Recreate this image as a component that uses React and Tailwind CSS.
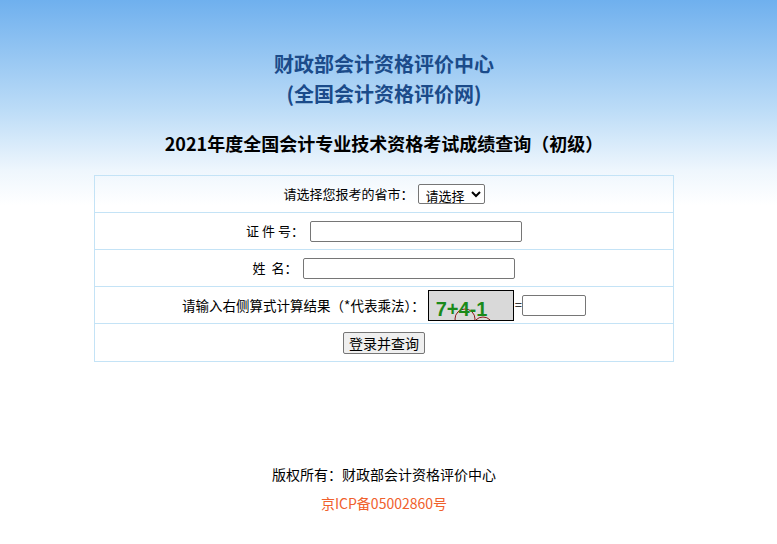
const cjk = { fontFamily: '"Noto Sans CJK SC", "Noto Sans", sans-serif' };

function Row({ children, last }) {
  return (
    <div
      className={
        'flex h-[37px] items-center justify-center text-[13px] text-black ' +
        (last ? '' : 'border-b border-[#c4e3f6]')
      }
    >
      {children}
    </div>
  );
}

function Captcha() {
  return (
    <div className="relative h-[31px] w-[86px] overflow-hidden border border-black bg-[#d9d9d9]">
      <svg className="absolute inset-0" width="86" height="31" viewBox="0 0 86 31">
        <circle cx="36" cy="28" r="10" fill="none" stroke="#8b1a1a" strokeWidth="1" />
        <circle cx="54" cy="36" r="10" fill="none" stroke="#8b1a1a" strokeWidth="1" />
        <circle cx="93" cy="35" r="10" fill="none" stroke="#8b1a1a" strokeWidth="1" />
      </svg>
      <span
        className="absolute left-[7px] top-[8px] text-[20px] font-bold leading-none text-[#1a8a1a]"
        style={{ fontFamily: '"Liberation Sans", Arial, sans-serif' }}
      >
        7+4-1
      </span>
    </div>
  );
}

export default function App() {
  return (
    <div
      className="min-h-[544px] w-full bg-[linear-gradient(to_bottom,#6fb0ee_0px,#bcdcf7_110px,#eef6fd_170px,#ffffff_205px)]"
      style={cjk}
    >
      <div className="w-[768px]">
        <div className="flex flex-col items-center pt-[49px]">
          <div className="text-[20px] font-bold leading-[30px] text-[#1b4b8a]">财政部会计资格评价中心</div>
          <div className="text-[20px] font-bold leading-[30px] text-[#1b4b8a]">(全国会计资格评价网)</div>
          <div className="mt-[19px] text-[18px] font-bold leading-[30px] text-black">
            2021年度全国会计专业技术资格考试成绩查询（初级）
          </div>
        </div>

        <div className="mx-auto mt-[17px] w-[580px] border border-[#c4e3f6]">
          <Row>
            <span>请选择您报考的省市：</span>
            <select
              className="ml-[4px] h-[20px] rounded-[2px] border border-[#767676] bg-white pl-[3px] pr-[2px] text-[13px] text-black"
              style={cjk}
            >
              <option>请选择</option>
            </select>
          </Row>
          <Row>
            <span className="mr-[6px]">证 件 号：</span>
            <input className="h-[21px] w-[212px] rounded-[2px] border border-[#767676] bg-white" />
          </Row>
          <Row>
            <span className="mr-[6px]">姓&nbsp;&nbsp;名：</span>
            <input className="h-[21px] w-[212px] rounded-[2px] border border-[#767676] bg-white" />
          </Row>
          <Row>
            <span className="mr-[3px] text-[13.5px]">请输入右侧算式计算结果（*代表乘法）：</span>
            <Captcha />
            <span className="ml-[1px]">=</span>
            <input className="h-[21px] w-[64px] rounded-[2px] border border-[#767676] bg-white" />
          </Row>
          <Row last>
            <button
              className="h-[22px] rounded-[2px] border border-[#767676] bg-[#efefef] px-[5px] text-[14px] leading-none text-black"
              style={cjk}
            >
              登录并查询
            </button>
          </Row>
        </div>

        <div className="mt-[98px] flex flex-col items-center text-[14px]">
          <div className="leading-[28px] text-black">版权所有：财政部会计资格评价中心</div>
          <div className="leading-[31px] text-[#f0602c]">京ICP备05002860号</div>
        </div>
      </div>
    </div>
  );
}
